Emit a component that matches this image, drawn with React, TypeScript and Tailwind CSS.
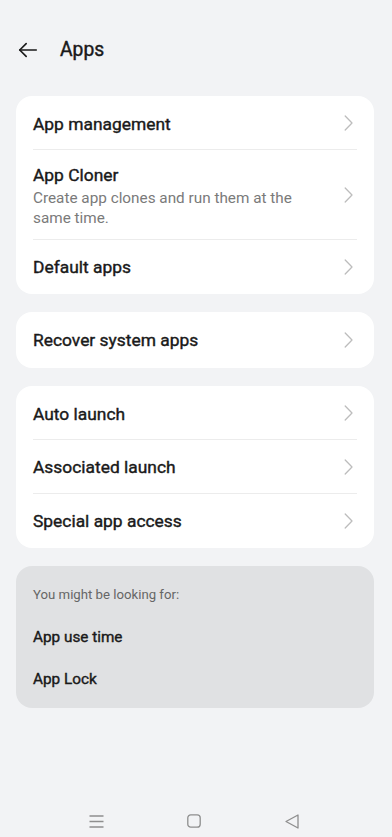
interface Row {
  title: string
  subtitle?: string
}

const groups: Row[][] = [
  [
    { title: 'App management' },
    { title: 'App Cloner', subtitle: 'Create app clones and run them at the same time.' },
    { title: 'Default apps' },
  ],
  [{ title: 'Recover system apps' }],
  [{ title: 'Auto launch' }, { title: 'Associated launch' }, { title: 'Special app access' }],
]

// Roboto here only ships 400/700, so medium is faked with a thin text stroke
const medium = 'font-normal text-[#1a1a1a] [-webkit-text-stroke:0.4px_#1a1a1a]'

function Chevron() {
  return (
    <svg width="9" height="16" viewBox="0 0 9 16" fill="none" stroke="#bdbdbd" strokeWidth="1.3" strokeLinecap="round" strokeLinejoin="round" className="shrink-0">
      <path d="M1.2 1l6.8 7-6.8 7" />
    </svg>
  )
}

function SettingsRow({ row, first, last, single }: { row: Row; first: boolean; last: boolean; single: boolean }) {
  let box = 'h-[54px] flex items-center'
  if (row.subtitle) box = 'pt-[14px] pb-[12px]'
  else if (single) box = 'h-[56px] flex items-center'
  else if (first) box = 'h-[54px] pt-[2px] flex items-center'

  return (
    <div className="relative flex items-center pl-[17px] pr-[21px]">
      <div className={`flex-1 min-w-0 ${box}`}>
        <div className={`text-[17.4px] leading-[22px] ${medium}`}>{row.title}</div>
        {row.subtitle && (
          <div className="mt-[2px] text-[15.3px] leading-[20px] text-[#7a7a7a] pr-[30px]">{row.subtitle}</div>
        )}
      </div>
      <Chevron />
      {!last && <div className="absolute bottom-0 left-[17px] right-[17px] h-px bg-[#ececec]" />}
    </div>
  )
}

export default function App() {
  return (
    <div
      className="min-h-[837px] w-[392px] bg-[#f2f3f5] flex flex-col"
      style={{ fontFamily: 'Roboto, "Noto Sans", sans-serif' }}
    >
      <div className="flex items-center h-[50px] mt-[25px] pl-[17px]">
        <svg width="22" height="22" viewBox="0 0 24 24" fill="none" stroke="#1a1a1a" strokeWidth="1.8" strokeLinecap="round" strokeLinejoin="round">
          <path d="M21 12H3" />
          <path d="M10 5l-7 7 7 7" />
        </svg>
        <div className={`ml-[21px] text-[19.3px] ${medium}`}>Apps</div>
      </div>

      <div className="flex flex-col gap-[18px] pl-4 pr-[18px] mt-[21px]">
        {groups.map((g, gi) => (
          <div key={gi} className="rounded-2xl bg-white">
            {g.map((row, i) => (
              <SettingsRow
                key={row.title}
                row={row}
                first={i === 0}
                last={i === g.length - 1}
                single={g.length === 1}
              />
            ))}
          </div>
        ))}

        <div className="rounded-2xl bg-[#e0e1e3] px-[17px] pt-[20px] pb-[8px]">
          <div className="text-[13.2px] leading-[18px] text-[#666]">You might be looking for:</div>
          <div className={`mt-[12px] h-[42px] flex items-center text-[15.3px] ${medium}`}>App use time</div>
          <div className={`h-[42px] flex items-center text-[15.3px] ${medium}`}>App Lock</div>
        </div>
      </div>

      <div className="mt-auto h-[30px] mb-[1px] flex items-center pl-[86px] gap-[78px]">
        <div className="w-[20px] flex justify-center">
          <svg width="15" height="13" viewBox="0 0 15 13" fill="none" stroke="#8e8e8e" strokeWidth="1.3">
            <path d="M0.5 1h14M0.5 6.5h14M0.5 12h14" />
          </svg>
        </div>
        <div className="w-[20px] flex justify-center">
          <svg width="14" height="14" viewBox="0 0 14 14" fill="none" stroke="#8e8e8e" strokeWidth="1.3">
            <rect x="0.8" y="0.8" width="12.4" height="12.4" rx="3" />
          </svg>
        </div>
        <div className="w-[20px] flex justify-center">
          <svg width="14" height="15" viewBox="0 0 14 15" fill="none" stroke="#8e8e8e" strokeWidth="1.3" strokeLinejoin="round">
            <path d="M13 1v13L1 7.5z" />
          </svg>
        </div>
      </div>
    </div>
  )
}
